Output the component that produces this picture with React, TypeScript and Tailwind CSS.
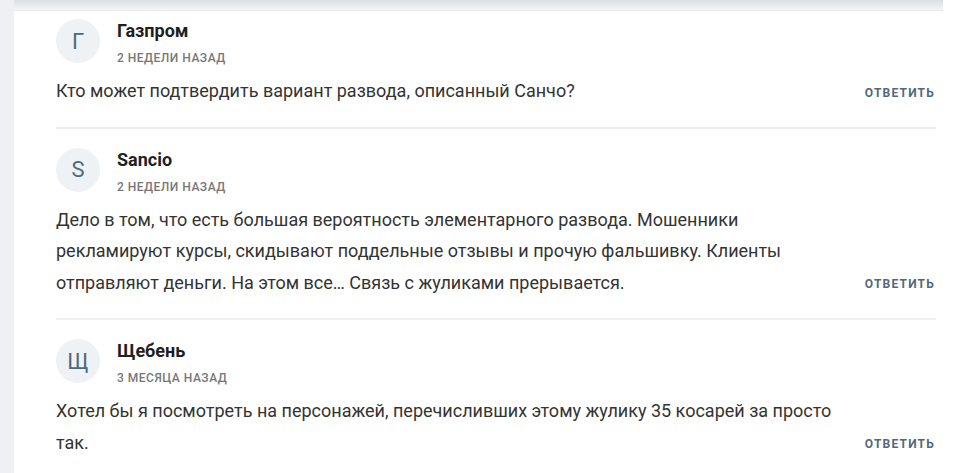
const comments = [
  {
    letter: 'Г',
    name: 'Газпром',
    date: '2 недели назад',
    text: 'Кто может подтвердить вариант развода, описанный Санчо?',
  },
  {
    letter: 'S',
    name: 'Sancio',
    date: '2 недели назад',
    text: 'Дело в том, что есть большая вероятность элементарного развода. Мошенники рекламируют курсы, скидывают поддельные отзывы и прочую фальшивку. Клиенты отправляют деньги. На этом все… Связь с жуликами прерывается.',
  },
  {
    letter: 'Щ',
    name: 'Щебень',
    date: '3 месяца назад',
    text: 'Хотел бы я посмотреть на персонажей, перечисливших этому жулику 35 косарей за просто так.',
  },
];

const Comment = ({ c, first, last }: { c: (typeof comments)[number]; first: boolean; last: boolean }) => (
  <div className={`${first ? 'pt-[8px]' : 'pt-[19px]'} ${last ? '' : 'border-b-2 border-[#efefef] pb-[20px]'}`}>
    <div className="flex items-start">
      <div className="w-[44px] h-[44px] rounded-full bg-[#eef2f5] flex items-center justify-center text-[22px] text-[#4b6a7f] shrink-0">
        {c.letter}
      </div>
      <div className="ml-[17px] pt-[1px]">
        <div className="text-[18px] leading-[22px] font-bold text-[#1f1f1f]">{c.name}</div>
        <div className="mt-[9px] text-[12px] leading-[14px] font-medium uppercase tracking-[0.5px] text-[#777]">
          {c.date}
        </div>
      </div>
    </div>
    <div className="mt-[10px] flex items-end justify-between">
      <p className="w-[790px] text-[18px] leading-[31.5px] text-[#333]">{c.text}</p>
      <button className="mb-[7px] mr-[1px] text-[12px] leading-[14px] font-bold uppercase tracking-[1.2px] text-[#52697c]">
        Ответить
      </button>
    </div>
  </div>
);

export default function App() {
  return (
    <div
      className="flex w-[973px] h-[473px] overflow-hidden bg-white"
      style={{ fontFamily: 'Roboto, "Noto Sans", sans-serif' }}
    >
      <div className="w-[14px] shrink-0 bg-[#eef0f3]" />
      <div className="flex-1 flex flex-col">
        <div className="h-[11px] mr-[30px] bg-gradient-to-b from-[#dcdfe2] to-[#f3f5f7] border-b border-[#e6ebf0]" />
        <div className="pl-[42px] pr-[37px]">
          {comments.map((c, i) => (
            <Comment key={c.name} c={c} first={i === 0} last={i === comments.length - 1} />
          ))}
        </div>
      </div>
    </div>
  );
}
